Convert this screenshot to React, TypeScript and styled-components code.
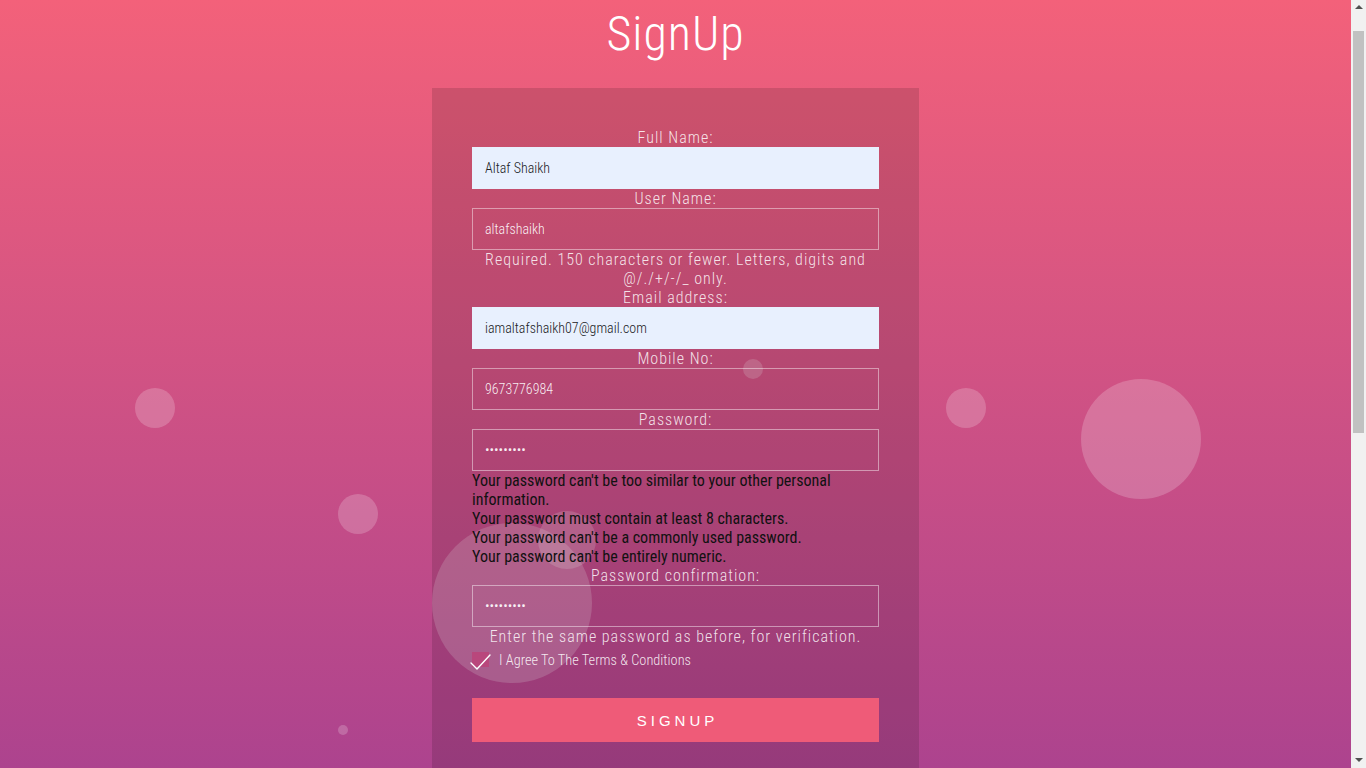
import React from "react";
import styled, { createGlobalStyle } from "styled-components";

const GlobalStyle = createGlobalStyle`
  html, body {
    margin: 0;
    padding: 0;
    height: 100%;
    overflow: hidden;
  }
  body {
    font-family: "Roboto Condensed", Roboto, "Liberation Sans", sans-serif;
    background: #722a9f;
  }
  * { box-sizing: border-box; }
`;

const Window = styled.div`
  display: flex;
  height: 100vh;
  width: 100%;
`;

const Viewport = styled.div`
  flex: 1;
  min-width: 0;
  height: 100%;
  overflow: hidden;
`;

const ScrollRail = styled.div`
  flex: none;
  width: 15px;
  height: 100%;
  background: #f1f1f1;
  display: flex;
  flex-direction: column;
  align-items: center;
`;

const ScrollArrow = styled.div<{ $down?: boolean }>`
  flex: none;
  width: 15px;
  height: 15px;
  display: flex;
  align-items: center;
  justify-content: center;
  margin-top: ${(p) => (p.$down ? "auto" : "0")};
`;

const ScrollThumb = styled.div`
  flex: none;
  width: 11px;
  height: 402px;
  margin-top: 16px;
  background: #c1c1c1;
`;

const Page = styled.div`
  position: relative;
  min-height: 1410px;
  overflow: hidden;
  background: linear-gradient(to bottom, #f3617a 0px, #722a9f 1410px);
`;

const Bubble = styled.span`
  position: absolute;
  border-radius: 50%;
  background: rgba(255, 255, 255, 0.2);
  pointer-events: none;
  z-index: 0;
`;

const Title = styled.h1`
  position: relative;
  z-index: 1;
  margin: 5px 0 26px;
  text-align: center;
  font-size: 48px;
  font-weight: 300;
  letter-spacing: 1px;
  line-height: normal;
  color: #ffffff;
`;

const Card = styled.form`
  position: relative;
  z-index: 1;
  width: 487px;
  margin: 0 auto;
  padding: 40px 40px 44px;
  background: rgba(0, 0, 0, 0.13);
  display: flex;
  flex-direction: column;
`;

const Label = styled.label`
  display: block;
  text-align: center;
  font-size: 16px;
  font-weight: 300;
  letter-spacing: 1px;
  line-height: 19px;
  color: rgba(255, 255, 255, 0.85);
`;

const Input = styled.input<{ $filled?: boolean }>`
  display: block;
  width: 100%;
  height: 42px;
  padding: 0 12px;
  margin: 0;
  outline: none;
  border: 1px solid ${(p) => (p.$filled ? "#e8f0fe" : "rgba(255, 255, 255, 0.45)")};
  background: ${(p) => (p.$filled ? "#e8f0fe" : "transparent")};
  color: ${(p) => (p.$filled ? "#202124" : "rgba(255, 255, 255, 0.92)")};
  font-family: "Roboto Condensed", Roboto, sans-serif;
  font-size: 14px;
  font-weight: 300;
`;

const Help = styled.p`
  margin: 0;
  text-align: center;
  font-size: 16px;
  font-weight: 300;
  letter-spacing: 1px;
  line-height: 19px;
  color: rgba(255, 255, 255, 0.85);
`;

const Rules = styled.ul`
  margin: 0;
  padding: 0;
  list-style: none;
  font-size: 16px;
  font-weight: 400;
  line-height: 19px;
  color: #111111;
`;

const Rule = styled.li`
  margin: 0;
`;

const CheckRow = styled.label`
  display: flex;
  align-items: center;
  gap: 9px;
  margin-top: 5px;
  height: 19px;
  font-size: 14.4px;
  font-weight: 300;
  color: rgba(255, 255, 255, 0.88);
`;

const CheckBox = styled.span`
  position: relative;
  width: 18px;
  height: 18px;
  flex: none;
`;

const CheckSquare = styled.span`
  position: absolute;
  left: 0;
  top: 0;
  width: 17px;
  height: 15px;
  background: #b9477c;
`;

const CheckMark = styled.svg`
  position: absolute;
  left: -2px;
  top: -3px;
  overflow: visible;
`;

const Button = styled.button`
  display: block;
  width: 100%;
  height: 44px;
  margin-top: 28px;
  border: none;
  background: #ef5b78;
  color: #ffffff;
  font-family: "Liberation Sans", Arial, sans-serif;
  font-size: 15px;
  letter-spacing: 4px;
  padding: 0 0 0 4px;
  cursor: pointer;
`;

const bubbles = [
  { x: 155, y: 408, d: 40 },
  { x: 358, y: 514, d: 40 },
  { x: 343, y: 730, d: 10 },
  { x: 512, y: 603, d: 160 },
  { x: 567, y: 540, d: 58 },
  { x: 753, y: 369, d: 20 },
  { x: 966, y: 408, d: 40 },
  { x: 1141, y: 439, d: 120 },
];

type Field = {
  label: string;
  value: string;
  filled?: boolean;
};

const fields: Field[] = [
  { label: "Full Name:", value: "Altaf Shaikh", filled: true },
  { label: "User Name:", value: "altafshaikh" },
];

export default function App() {
  return (
    <>
      <GlobalStyle />
      <Window>
        <Viewport>
          <Page>
            {bubbles.map((b, i) => (
              <Bubble
                key={i}
                style={{ left: b.x - b.d / 2, top: b.y - b.d / 2, width: b.d, height: b.d }}
              />
            ))}
            <Title>SignUp</Title>
            <Card onSubmit={(e) => e.preventDefault()}>
              {fields.map((f) => (
                <React.Fragment key={f.label}>
                  <Label>{f.label}</Label>
                  <Input $filled={f.filled} type="text" value={f.value} readOnly />
                </React.Fragment>
              ))}
              <Help>Required. 150 characters or fewer. Letters, digits and @/./+/-/_ only.</Help>
              <Label>Email address:</Label>
              <Input $filled type="email" value="iamaltafshaikh07@gmail.com" readOnly />
              <Label>Mobile No:</Label>
              <Input type="text" value="9673776984" readOnly />
              <Label>Password:</Label>
              <Input type="password" value="altaf1234" readOnly />
              <Rules>
                <Rule>Your password can't be too similar to your other personal information.</Rule>
                <Rule>Your password must contain at least 8 characters.</Rule>
                <Rule>Your password can't be a commonly used password.</Rule>
                <Rule>Your password can't be entirely numeric.</Rule>
              </Rules>
              <Label>Password confirmation:</Label>
              <Input type="password" value="altaf1234" readOnly />
              <Help>Enter the same password as before, for verification.</Help>
              <CheckRow>
                <CheckBox>
                  <CheckSquare />
                  <CheckMark width="22" height="22" viewBox="0 0 22 22">
                    <polyline
                      points="1,14 7,20 20,6"
                      fill="none"
                      stroke="#ffffff"
                      strokeWidth="1.4"
                      strokeLinecap="round"
                      strokeLinejoin="round"
                    />
                  </CheckMark>
                </CheckBox>
                I Agree To The Terms &amp; Conditions
              </CheckRow>
              <Button type="submit">SIGNUP</Button>
            </Card>
          </Page>
        </Viewport>
        <ScrollRail>
          <ScrollArrow>
            <svg width="8" height="5" viewBox="0 0 8 5">
              <polygon points="0,4 4,0 8,4" fill="#505050" />
            </svg>
          </ScrollArrow>
          <ScrollThumb />
          <ScrollArrow $down>
            <svg width="8" height="5" viewBox="0 0 8 5">
              <polygon points="0,0 8,0 4,4" fill="#505050" />
            </svg>
          </ScrollArrow>
        </ScrollRail>
      </Window>
    </>
  );
}
